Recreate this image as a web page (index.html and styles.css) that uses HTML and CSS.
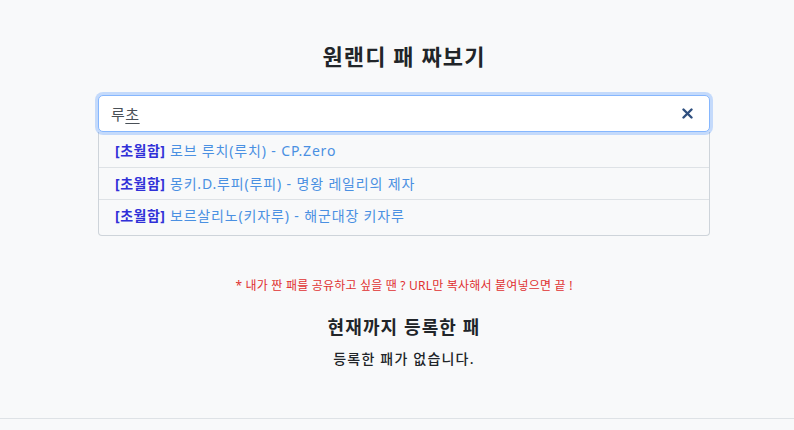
FILE: index.html
```html
<!DOCTYPE html>
<html lang="ko">
<head>
<meta charset="utf-8">
<link rel="stylesheet" href="styles.css">
</head>
<body>
<main class="page">
  <h1 class="title">원랜디 패 짜보기</h1>
  <div class="search">
    <div class="input">
      <span class="value">루<u class="compose">초</u></span>
      <svg class="clear" width="11" height="11" viewBox="0 0 11 11"><path d="M1.5 1.5 L9.5 9.5 M9.5 1.5 L1.5 9.5" stroke="#2f4f7f" stroke-width="2.4" stroke-linecap="round"/></svg>
    </div>
    <ul class="list">
      <li class="item"><b class="tag">[초월함]</b> 로브 루치(루치) - CP.Zero</li>
      <li class="item"><b class="tag">[초월함]</b> 몽키.D.루피(루피) - 명왕 레일리의 제자</li>
      <li class="item"><b class="tag">[초월함]</b> 보르살리노(키자루) - 해군대장 키자루</li>
    </ul>
  </div>
  <p class="note">* 내가 짠 패를 공유하고 싶을 땐 ? URL만 복사해서 붙여넣으면 끝 !</p>
  <h2 class="sub">현재까지 등록한 패</h2>
  <p class="empty">등록한 패가 없습니다.</p>
</main>
<footer class="foot"></footer>
</body>
</html>
```
FILE: styles.css
```css
html, body {
  margin: 0;
  padding: 0;
  background: #f8f9fa;
  font-family: "Noto Sans", "Noto Sans CJK KR", sans-serif;
  color: #212529;
  overflow: hidden;
}
.page {
  width: 612px;
  margin: 0 0 0 98px;
  padding-top: 38px;
  box-sizing: border-box;
}
.title {
  margin: 0;
  text-align: center;
  font-size: 22px;
  font-weight: 700;
  line-height: 36px;
  letter-spacing: 1.1px;
}
.search {
  margin-top: 21px;
}
.input {
  height: 37px;
  box-sizing: border-box;
  border: 1px solid #86b7fe;
  border-radius: 5px;
  background: #fff;
  box-shadow: 0 0 0 3px rgba(13, 110, 253, 0.22);
  display: flex;
  align-items: center;
  justify-content: space-between;
  padding: 0 16px 0 12px;
  position: relative;
  z-index: 1;
}
.value {
  font-size: 15px;
  color: #495057;
  letter-spacing: 0.5px;
}
.compose {
  text-decoration-thickness: 1px;
  text-underline-offset: 3px;
  color: #495057;
}
.list {
  list-style: none;
  margin: 0;
  padding: 3px 0 4px;
  border: 1px solid #ced4da;
  border-top: none;
  border-radius: 0 0 4px 4px;
  background: #f8f9fa;
}
.item {
  height: 32px;
  line-height: 32px;
  padding-left: 16px;
  font-size: 14px;
  color: #4a90e2;
  border-top: 1px solid #dee2e6;
  box-sizing: border-box;
  letter-spacing: 0.85px;
}
.item:first-child {
  border-top: none;
}
.tag {
  color: #3030d8;
  font-weight: 700;
  letter-spacing: 0.5px;
}
.note {
  margin: 40px 0 0;
  text-align: center;
  font-size: 12px;
  color: #e03131;
  line-height: 20px;
  letter-spacing: 0.2px;
}
.sub {
  margin: 17px 0 0;
  text-align: center;
  font-size: 18px;
  font-weight: 700;
  line-height: 28px;
  letter-spacing: 1.1px;
}
.empty {
  margin: 7px 0 0;
  text-align: center;
  font-size: 14px;
  font-weight: 500;
  line-height: 22px;
  letter-spacing: 1.2px;
}
.foot {
  border-top: 1px solid #dee2e6;
  height: 10px;
  margin-top: 48px;
}
```
